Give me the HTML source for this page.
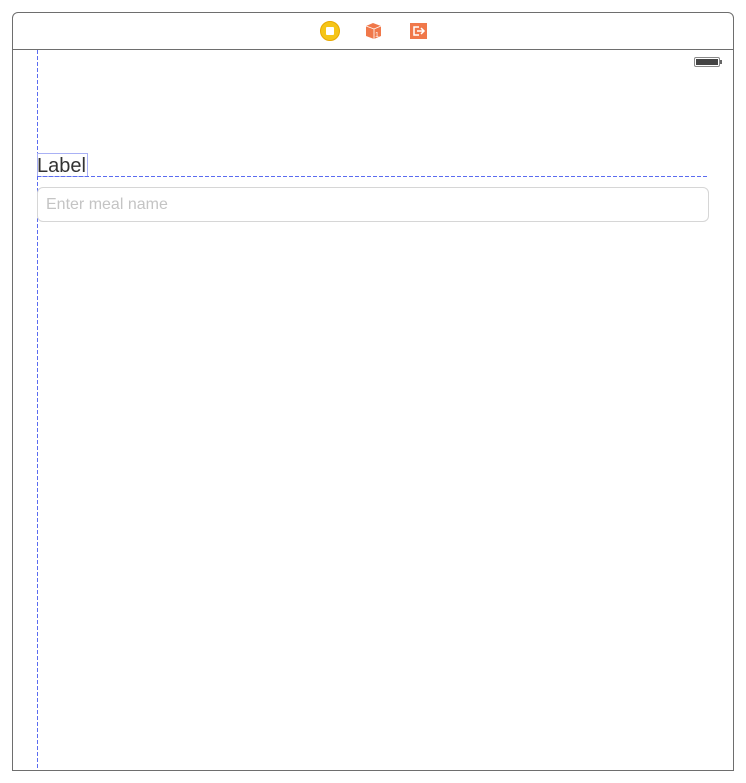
<!DOCTYPE html>
<html><head><style>
body{margin:0;width:746px;height:783px;background:#fff;position:relative;overflow:hidden;font-family:"Liberation Sans",sans-serif}
.a{position:absolute}
</style></head><body>
<div class="a" style="left:12px;top:12px;width:720px;height:757px;border:1px solid #6e6e6e;border-radius:6px 6px 0 0"></div>
<div class="a" style="left:13px;top:49px;width:721px;height:1px;background:#6e6e6e"></div>
<div class="a" style="left:320px;top:21px;width:20px;height:20px;border-radius:50%;background:#f5c518;border:1px solid #e8a800;box-sizing:border-box"></div>
<div class="a" style="left:326px;top:27px;width:8px;height:8px;background:#fff;border-radius:1px"></div>
<svg class="a" style="left:364px;top:21px" width="19" height="19" viewBox="0 0 19 19"><path d="M2 5 L9 2 L17 5 L17 15 L10 18 L2 15Z" fill="#f0784a"/><path d="M2 5 L10 8 L17 5 M10 8 L10 18" stroke="#fff" stroke-width="0.8" fill="none"/><text x="11" y="16" font-size="7" fill="#fff" font-family="Liberation Sans">1</text></svg>
<div class="a" style="left:410px;top:23px;width:17px;height:16px;background:#f0784a"></div>
<svg class="a" style="left:410px;top:23px" width="17" height="16"><path d="M9 4 H4 V12 H9 M7 8 H14 M11 5 L14 8 L11 11" stroke="#fff" stroke-width="1.5" fill="none"/></svg>
<div class="a" style="left:694px;top:57px;width:26px;height:10px;border:1px solid #888;border-radius:2px;box-sizing:border-box;background:#fff"></div>
<div class="a" style="left:696px;top:59px;width:22px;height:6px;background:#444"></div>
<div class="a" style="left:720px;top:60px;width:2px;height:4px;background:#666"></div>
<div class="a" style="left:37px;top:50px;width:1px;height:720px;background:repeating-linear-gradient(to bottom,#5b6cf0 0 4px,transparent 4px 6px)"></div>
<div class="a" style="left:37px;top:153px;width:49px;height:22px;border:1px solid #a9b1f5"></div>
<div class="a" style="left:37px;top:155px;font-size:20px;color:#333;line-height:22px">Label</div>
<div class="a" style="left:37px;top:176px;width:672px;height:1px;background:repeating-linear-gradient(to right,#5b6cf0 0 4px,transparent 4px 6px)"></div>
<div class="a" style="left:37px;top:187px;width:672px;height:35px;border:1px solid #d6d6d6;border-radius:6px;box-sizing:border-box"></div>
<div class="a" style="left:46px;top:195px;font-size:16px;color:#c4c4c4;line-height:20px">Enter meal name</div>
</body></html>
